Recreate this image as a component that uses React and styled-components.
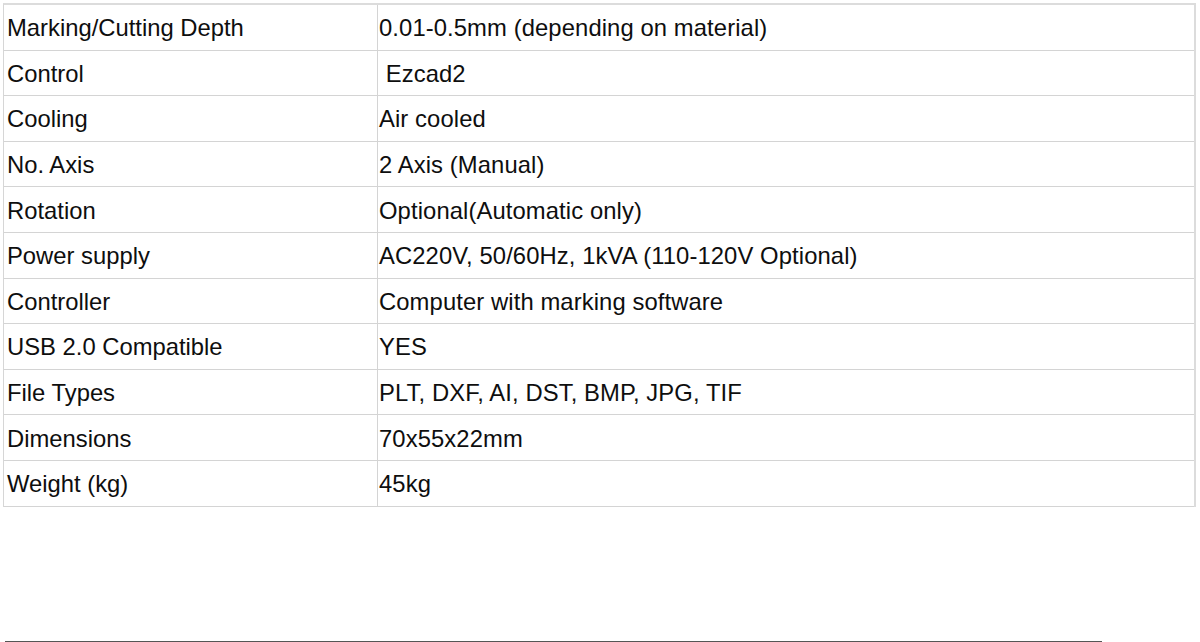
import React from "react";
import styled, { createGlobalStyle } from "styled-components";

const Global = createGlobalStyle`
  html, body { margin: 0; padding: 0; background: #fff; }
  body { font-family: "Liberation Sans", Arial, sans-serif; color: #111; }
`;

const Page = styled.div`
  width: 1200px;
  height: 642px;
  display: flex;
  flex-direction: column;
  box-sizing: border-box;
  padding: 3px 4px 0 3px;
  overflow: hidden;
`;

const Table = styled.div`
  display: grid;
  grid-template-columns: 374px 1fr;
  grid-auto-rows: 45.6px;
  border-top: 2px solid #dcdcdc;
  border-left: 1px solid #d6d6d6;
  border-right: 2px solid #dcdcdc;
  width: 1193px;
  box-sizing: border-box;
`;

const Cell = styled.div`
  display: flex;
  align-items: center;
  box-sizing: border-box;
  border-bottom: 1px solid #d4d4d4;
  border-right: ${(p) => (p.$first ? "1px solid #d4d4d4" : "none")};
  padding-left: ${(p) => (p.$first ? "3px" : "1px")};
  padding-top: 2px;
  font-size: 23.8px;
  letter-spacing: ${(p) => (p.$first ? "0" : "0.1px")};
  white-space: pre;
  color: #0e0e0e;
`;

const Rule = styled.div`
  margin-top: auto;
  margin-left: 2px;
  width: 1097px;
  height: 1px;
  background: #555;
`;

const rows = [
  ["Marking/Cutting Depth", "0.01-0.5mm (depending on material)"],
  ["Control", " Ezcad2"],
  ["Cooling", "Air cooled"],
  ["No. Axis", "2 Axis (Manual)"],
  ["Rotation", "Optional(Automatic only)"],
  ["Power supply", "AC220V, 50/60Hz, 1kVA (110-120V Optional)"],
  ["Controller", "Computer with marking software"],
  ["USB 2.0 Compatible", "YES"],
  ["File Types", "PLT, DXF, AI, DST, BMP, JPG, TIF"],
  ["Dimensions", "70x55x22mm"],
  ["Weight (kg)", "45kg"],
];

export default function App() {
  return (
    <>
      <Global />
      <Page>
        <Table>
          {rows.map(([k, v]) => (
            <React.Fragment key={k}>
              <Cell $first>{k}</Cell>
              <Cell>{v}</Cell>
            </React.Fragment>
          ))}
        </Table>
        <Rule />
      </Page>
    </>
  );
}
